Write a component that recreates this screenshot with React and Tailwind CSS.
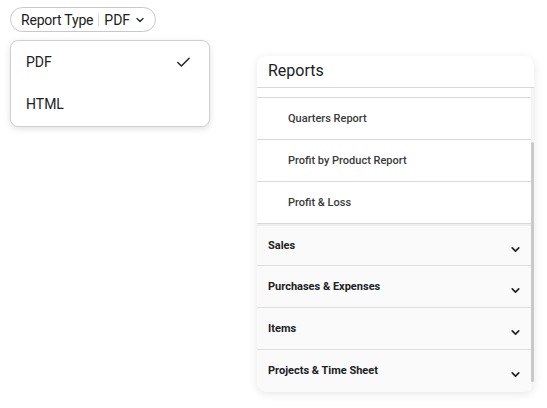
import { Check, ChevronDown } from 'lucide-react';

const subItems = ['Quarters Report', 'Profit by Product Report', 'Profit & Loss'];
const groups = ['Sales', 'Purchases & Expenses', 'Items', 'Projects & Time Sheet'];

export default function App() {
  return (
    <div className="relative w-[547px] h-[408px] bg-white text-[#202124]" style={{ fontFamily: 'Roboto, "Open Sans", sans-serif' }}>
      <div className="flex items-start">
        {/* report type picker */}
        <div className="pl-[10px] pt-[7px] w-[210px]">
          <button className="flex items-center h-[25px] pl-[10px] pr-[9px] rounded-full border border-[#c8c8c8] text-[14px] leading-none">
            <span className="tracking-[-0.2px]">Report Type</span>
            <span className="mx-[5px] h-[14px] w-px bg-[#dcdcdc]" />
            <span>PDF</span>
            <ChevronDown className="w-[12px] h-[12px] ml-[4px]" strokeWidth={2.6} />
          </button>
          <div className="mt-[8px] w-[200px] rounded-[8px] border border-[#d0d0d0] bg-white shadow-[0_2px_6px_rgba(0,0,0,0.12)]">
            <div className="flex items-center justify-between h-[42px] pl-[15px] pr-[17px] text-[14px]">
              <span>PDF</span>
              <Check className="w-[17px] h-[17px]" strokeWidth={2} />
            </div>
            <div className="flex items-center h-[43px] pl-[15px] text-[14px]">
              <span>HTML</span>
            </div>
          </div>
        </div>

        {/* reports panel */}
        <div className="ml-[47px] mt-[56px] w-[277px] rounded-[10px] bg-white shadow-[0_2px_10px_rgba(0,0,0,0.10)] overflow-hidden">
          <div className="h-[32px] border-b border-[#d9d9d9] pl-[11px] pt-[3px] text-[16px]">Reports</div>
          <div className="flex">
            <div className="flex-1">
              <div className="h-[10px] border-b border-[#d9d9d9]" />
              {subItems.map((s) => (
                <div key={s} className="h-[42px] flex items-center pl-[31px] pt-[2px] border-b border-[#d9d9d9] text-[11px] font-medium text-[#3a3a3a]">
                  {s}
                </div>
              ))}
              {groups.map((g, i) => (
                <div key={g} className={`h-[42px] flex items-center justify-between pl-[11px] pr-[9px] pt-[1px] bg-[#fafafa] text-[11px] font-bold text-[#202124] ${i < groups.length - 1 ? 'border-b border-[#dedede]' : ''} ${i === 0 ? 'border-t-2 border-t-[#eeeeee]' : ''}`}>
                  <span>{g}</span>
                  <ChevronDown className="w-[13px] h-[13px] mt-[6px]" strokeWidth={3} />
                </div>
              ))}
            </div>
            <div className="w-[3px] bg-[#f4f4f4]">
              <div className="mt-[54px] h-[240px] bg-[#c9c9c9] rounded-full" />
            </div>
          </div>
        </div>
      </div>
    </div>
  );
}
